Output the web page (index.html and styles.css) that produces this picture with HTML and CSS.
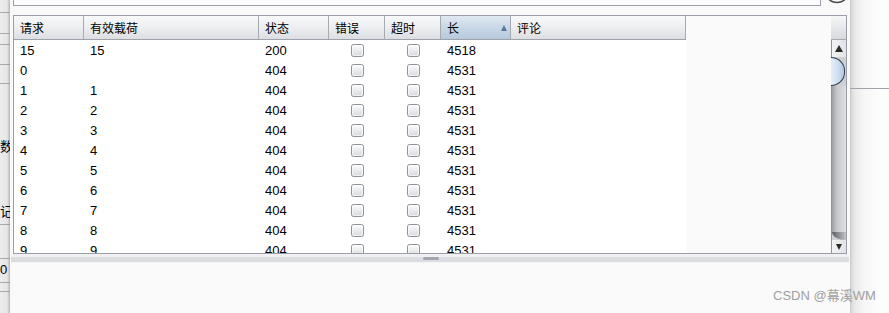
FILE: index.html
```html
<!DOCTYPE html>
<html>
<head>
<meta charset="utf-8">
<link rel="stylesheet" href="styles.css">
</head>
<body>
<div class="bgstrip">
  <div class="seg" style="height:13px"></div>
  <div class="seg" style="height:21px"></div>
  <div class="seg" style="height:11px"></div>
  <div class="seg" style="height:20px"></div>
  <div class="seg" style="height:19px"></div>
  <div class="seg tall"><div class="g g1">数</div><div class="g g2">记</div></div>
  <div class="seg" style="height:34px"></div>
  <div class="seg zero" style="height:24px"><span class="g">0</span></div>
  <div class="seg" style="height:9px"></div>
</div>

<div class="window">
  <div class="toprow">
    <div class="field"></div>
    <svg class="helpicon" width="26" height="5" viewBox="0 0 26 5"><circle cx="13" cy="-9.5" r="12" fill="none" stroke="#4a4a4a" stroke-width="1.4"/></svg>
  </div>

  <div class="panel">
    <div class="main">
      <div class="table">
        <div class="thead">
          <div class="th c1">请求</div>
          <div class="th c2">有效载荷</div>
          <div class="th c3">状态</div>
          <div class="th c4">错误</div>
          <div class="th c5">超时</div>
          <div class="th c6 sorted"><span>长</span><i class="sortarrow"></i></div>
          <div class="th c7">评论</div>
        </div>
        <div class="tbody">
          <div class="tr"><div class="td c1">15</div><div class="td c2">15</div><div class="td c3">200</div><div class="td c4 cc"><span class="cb"></span></div><div class="td c5 cc"><span class="cb"></span></div><div class="td c6">4518</div><div class="td c7"></div></div>
          <div class="tr"><div class="td c1">0</div><div class="td c2"></div><div class="td c3">404</div><div class="td c4 cc"><span class="cb"></span></div><div class="td c5 cc"><span class="cb"></span></div><div class="td c6">4531</div><div class="td c7"></div></div>
          <div class="tr"><div class="td c1">1</div><div class="td c2">1</div><div class="td c3">404</div><div class="td c4 cc"><span class="cb"></span></div><div class="td c5 cc"><span class="cb"></span></div><div class="td c6">4531</div><div class="td c7"></div></div>
          <div class="tr"><div class="td c1">2</div><div class="td c2">2</div><div class="td c3">404</div><div class="td c4 cc"><span class="cb"></span></div><div class="td c5 cc"><span class="cb"></span></div><div class="td c6">4531</div><div class="td c7"></div></div>
          <div class="tr"><div class="td c1">3</div><div class="td c2">3</div><div class="td c3">404</div><div class="td c4 cc"><span class="cb"></span></div><div class="td c5 cc"><span class="cb"></span></div><div class="td c6">4531</div><div class="td c7"></div></div>
          <div class="tr"><div class="td c1">4</div><div class="td c2">4</div><div class="td c3">404</div><div class="td c4 cc"><span class="cb"></span></div><div class="td c5 cc"><span class="cb"></span></div><div class="td c6">4531</div><div class="td c7"></div></div>
          <div class="tr"><div class="td c1">5</div><div class="td c2">5</div><div class="td c3">404</div><div class="td c4 cc"><span class="cb"></span></div><div class="td c5 cc"><span class="cb"></span></div><div class="td c6">4531</div><div class="td c7"></div></div>
          <div class="tr"><div class="td c1">6</div><div class="td c2">6</div><div class="td c3">404</div><div class="td c4 cc"><span class="cb"></span></div><div class="td c5 cc"><span class="cb"></span></div><div class="td c6">4531</div><div class="td c7"></div></div>
          <div class="tr"><div class="td c1">7</div><div class="td c2">7</div><div class="td c3">404</div><div class="td c4 cc"><span class="cb"></span></div><div class="td c5 cc"><span class="cb"></span></div><div class="td c6">4531</div><div class="td c7"></div></div>
          <div class="tr"><div class="td c1">8</div><div class="td c2">8</div><div class="td c3">404</div><div class="td c4 cc"><span class="cb"></span></div><div class="td c5 cc"><span class="cb"></span></div><div class="td c6">4531</div><div class="td c7"></div></div>
          <div class="tr"><div class="td c1">9</div><div class="td c2">9</div><div class="td c3">404</div><div class="td c4 cc"><span class="cb"></span></div><div class="td c5 cc"><span class="cb"></span></div><div class="td c6">4531</div><div class="td c7"></div></div>
        </div>
      </div>
    </div>
    <div class="vscroll">
      <div class="corner"></div>
      <div class="bar">
        <div class="btn up"><i class="tri-up"></i></div>
        <div class="thumb"></div>
        <div class="track"></div>
        <div class="trackend"></div>
        <div class="btn down"><i class="tri-down"></i></div>
      </div>
    </div>
  </div>

  <div class="divider"><span class="handle"></span></div>
  <div class="lower"></div>
</div>

<div class="rightpane">
  <div class="rp-top"></div>
</div>

<div class="watermark">CSDN @幕溪WM</div>
</body>
</html>
```

FILE: styles.css
```css
* { box-sizing: border-box; }
html, body { margin: 0; padding: 0; }
body {
  width: 889px;
  height: 313px;
  overflow: hidden;
  display: flex;
  background: #f9f9f9;
  position: relative;
  font-family: "Liberation Sans", "Noto Sans CJK SC", sans-serif;
  font-size: 13px;
  color: #000;
}

/* background window strip on the left */
.bgstrip {
  width: 10px;
  flex: none;
  display: flex;
  flex-direction: column;
  overflow: hidden;
  background: linear-gradient(to right, #ececec 0, #e6e6e6 70%, #c9c9c9 100%);
}
.seg {
  flex: none;
  border-bottom: 1px solid #a9a9a9;
  position: relative;
}
.seg.tall { height: 141px; padding-top: 54px; }
.g {
  font-family: "Noto Sans CJK SC", sans-serif;
  font-size: 13px;
  line-height: 16px;
  white-space: nowrap;
  margin-left: 0;
}
.g2 { margin-top: 49px; }
.zero { padding-top: 3px; }
.zero .g { font-family: "Liberation Sans", sans-serif; margin-left: 0; }

/* main window */
.window {
  width: 840px;
  flex: none;
  display: flex;
  flex-direction: column;
  padding-left: 3px;
  background: #f9f9f9;
  box-shadow: -1px 0 2px rgba(0,0,0,0.12);
  position: relative;
}
.toprow {
  display: flex;
  height: 6px;
  flex: none;
}
.field {
  width: 808px;
  height: 6px;
  background: #fcfcfc;
  border: 1px solid #9da1a9;
  border-top: none;
}
.helpicon { margin-left: 3px; display: block; }

.panel {
  margin-top: 9px;
  width: 834px;
  height: 239px;
  flex: none;
  border: 1px solid #9a9fa7;
  display: flex;
  background: #fafafa;
}
.main {
  flex: 1;
  overflow: hidden;
  background: #fafafa;
}
.table { width: 672px; }
.thead {
  display: flex;
  height: 24px;
  border-bottom: 1px solid #9ea3ab;
}
.th {
  height: 23px;
  display: flex;
  align-items: center;
  padding-left: 6px;
  border-right: 1px solid #a6aab1;
  background: linear-gradient(#f8f9fa 0, #eceef0 50%, #dcdee2 100%);
  font-family: "Noto Sans CJK SC", sans-serif;
  font-size: 12px;
}
.th.sorted {
  justify-content: space-between;
  padding-right: 3px;
  background: linear-gradient(#e0e9f1 0, #c9d8e6 50%, #b6c9dc 100%);
}
.sortarrow {
  width: 0;
  height: 0;
  border-left: 3.5px solid transparent;
  border-right: 3.5px solid transparent;
  border-bottom: 6px solid #5878a0;
  margin-top: 1px;
}
.c1 { width: 70px; }
.c2 { width: 175px; }
.c3 { width: 70px; }
.c4 { width: 56px; }
.c5 { width: 56px; }
.c6 { width: 70px; }
.c7 { width: 175px; }

.tr {
  display: flex;
  height: 20px;
  background: #fff;
}
.td {
  height: 20px;
  display: flex;
  align-items: center;
  padding-left: 6px;
  line-height: 15px;
}
.td.cc { justify-content: center; padding-left: 0; }
.cb {
  display: block;
  width: 13px;
  height: 13px;
  border: 1px solid #8e939b;
  border-radius: 2.5px;
  background: linear-gradient(#fdfdfd 0, #eceef0 45%, #d7dadf 100%);
  box-shadow: inset 0 0 0 1px rgba(255,255,255,0.6);
}

/* vertical scrollbar */
.vscroll {
  width: 15px;
  flex: none;
  display: flex;
  flex-direction: column;
}
.corner {
  height: 24px;
  flex: none;
  background: linear-gradient(#f6f7f8 0, #e6e7ea 50%, #d8dadd 100%);
  border-bottom: 1px solid #a6aab1;
}
.bar {
  flex: 1;
  display: flex;
  flex-direction: column;
  border-left: 1px solid #8f9298;
  background: #cfd0d4;
}
.btn {
  flex: none;
  display: flex;
  justify-content: center;
  align-items: center;
  background: linear-gradient(to right, #f2f3f4, #e2e3e6);
}
.btn.up { height: 17px; padding-bottom: 1px; }
.btn.down { height: 13px; }
.tri-up {
  width: 0; height: 0;
  border-left: 4px solid transparent;
  border-right: 4px solid transparent;
  border-bottom: 7px solid #2c2c2c;
}
.tri-down {
  width: 0; height: 0;
  border-left: 3.5px solid transparent;
  border-right: 3.5px solid transparent;
  border-top: 6px solid #2c2c2c;
}
.thumb {
  flex: none;
  height: 29px;
  width: 14px;
  margin-left: -1px;
  border: 1px solid #2f3e52;
  border-left: none;
  border-radius: 0 15px 15px 0 / 0 14.5px 14.5px 0;
  background: linear-gradient(to right, #e6eff8 0, #cfe0f0 50%, #b3cbe3 100%);
}
.track {
  flex: 1;
  background: linear-gradient(to right, #9ea0a5 0, #c5c6ca 35%, #d6d7da 75%, #e0e1e4 100%);
}
.trackend {
  flex: none;
  height: 8px;
  background: linear-gradient(to right, #5e6066 0, #8d8f94 50%, #c3c4c8 100%);
  border-bottom-left-radius: 14px 8px;
}

/* split divider */
.divider {
  height: 9px;
  flex: none;
  margin-left: -2px;
  width: 838px;
  padding-top: 3px;
  display: flex;
  justify-content: center;
  background: linear-gradient(#f1f1f3 0, #f1f1f3 3px, #dcdde1 3px, #dcdde1 8px, #f4f4f5 8px);
}
.handle {
  display: block;
  width: 16px;
  height: 3px;
  border-radius: 2px;
  background: #a2a5ac;
  margin-left: 2px;
}
.lower { flex: 1; background: #fafafa; }

/* right pane */
.rightpane {
  flex: 1;
  background: linear-gradient(to right, #c8c8c8 0, #dedede 2px, #ececec 6px, #f6f6f6 14px, #fdfdfd 30px);
}
.rp-top {
  height: 89px;
  border-bottom: 1px solid #9fa3aa;
}

.watermark {
  position: absolute;
  left: 773px;
  top: 288px;
  font-family: "Liberation Sans", "Noto Sans CJK SC", sans-serif;
  font-size: 13px;
  line-height: 16px;
  color: #a0a0a0;
  white-space: nowrap;
}
```
